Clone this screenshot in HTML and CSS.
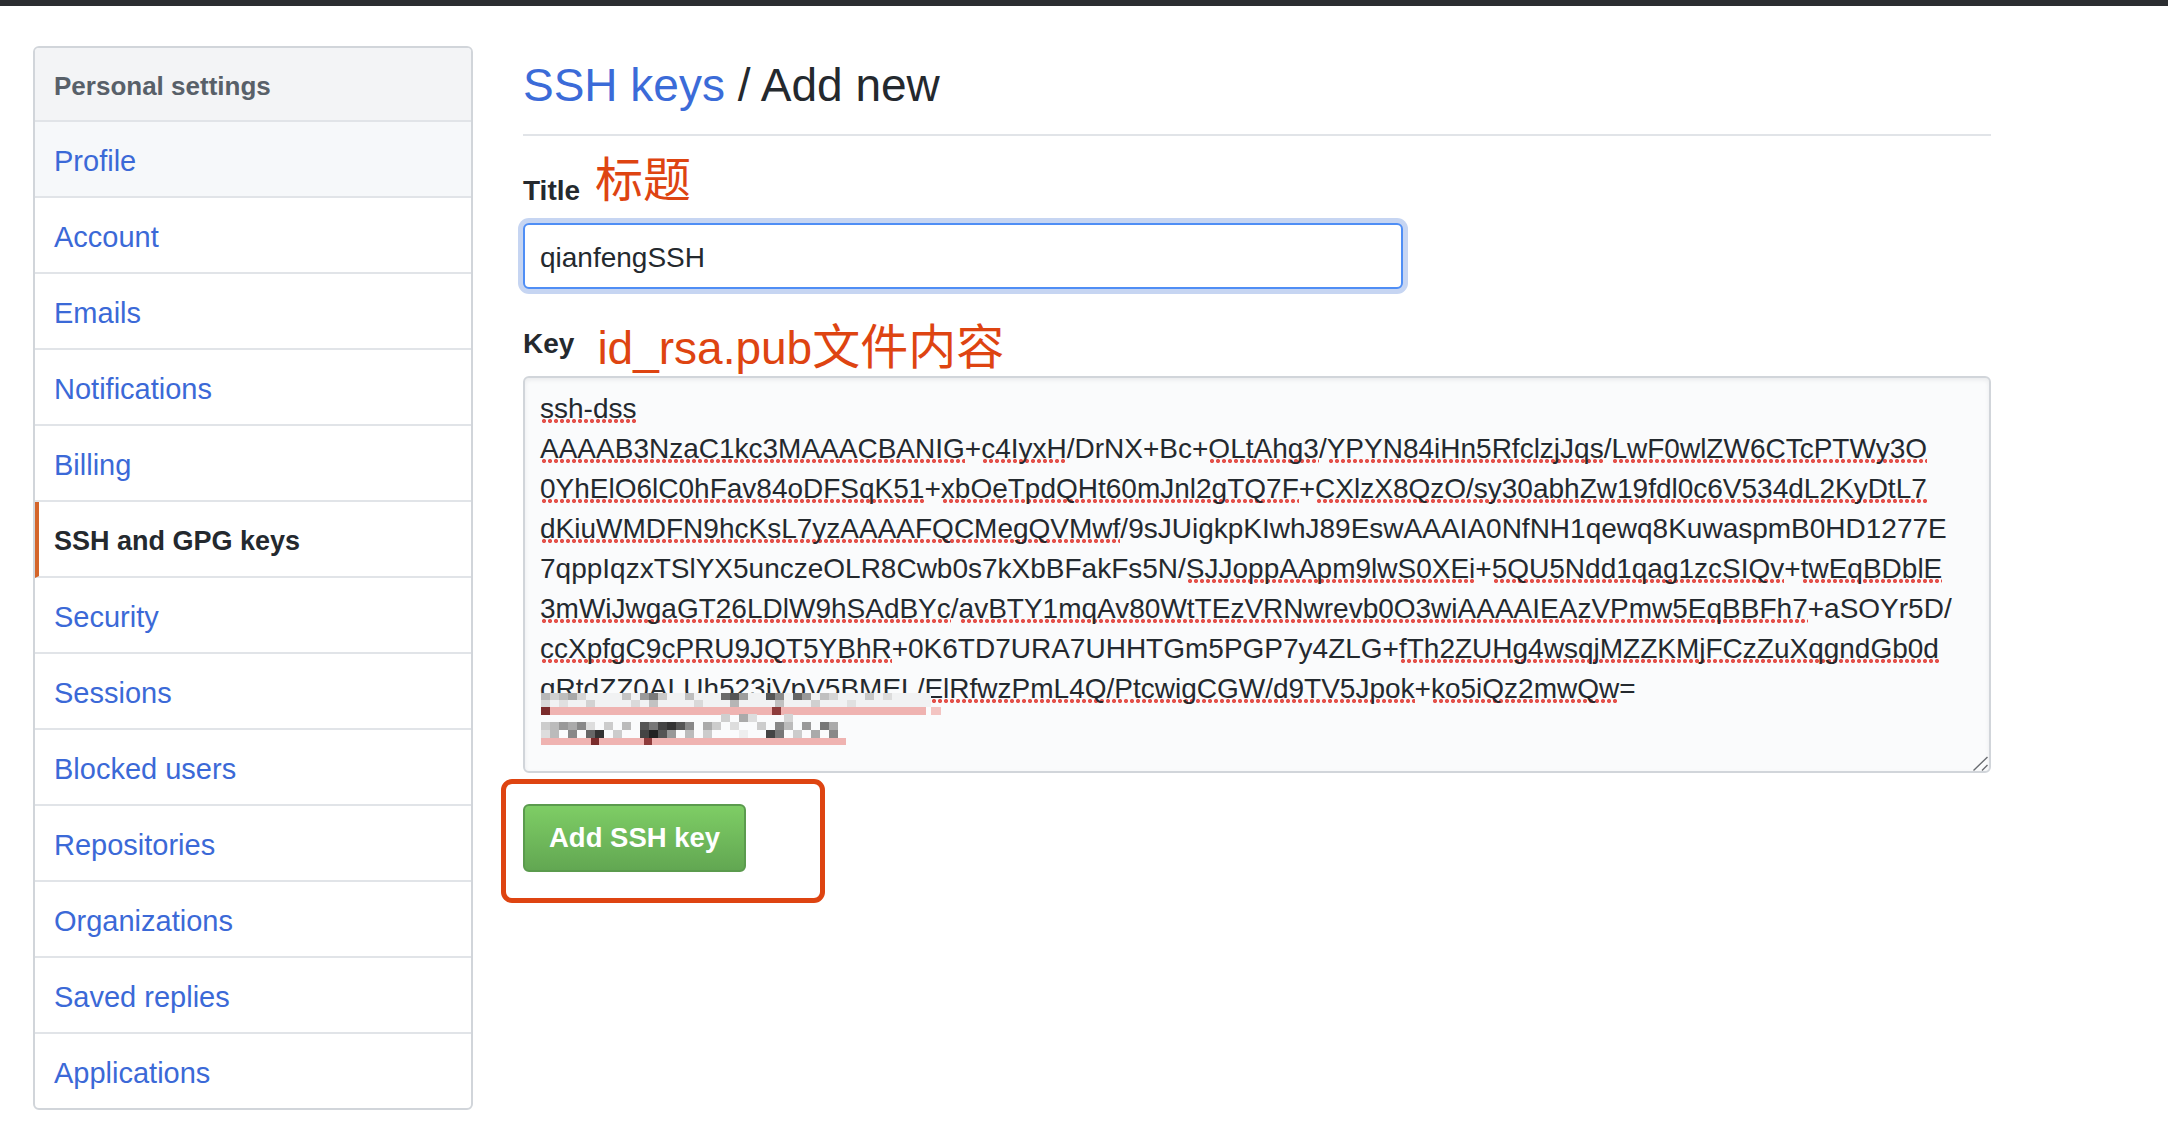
FILE: index.html
```html
<!DOCTYPE html>
<html lang="en">
<head>
<meta charset="utf-8">
<title>SSH keys / Add new</title>
<link rel="stylesheet" href="styles.css">
</head>
<body>
<div class="topbar"></div>
<div class="layout">
  <nav class="menu">
    <div class="menu-heading">Personal settings</div>
    <a class="menu-item is-hover" href="#">Profile</a>
    <a class="menu-item" href="#">Account</a>
    <a class="menu-item" href="#">Emails</a>
    <a class="menu-item" href="#">Notifications</a>
    <a class="menu-item" href="#">Billing</a>
    <a class="menu-item is-active" href="#">SSH and GPG keys</a>
    <a class="menu-item" href="#">Security</a>
    <a class="menu-item" href="#">Sessions</a>
    <a class="menu-item" href="#">Blocked users</a>
    <a class="menu-item" href="#">Repositories</a>
    <a class="menu-item" href="#">Organizations</a>
    <a class="menu-item" href="#">Saved replies</a>
    <a class="menu-item is-last" href="#">Applications</a>
  </nav>
  <main class="main">
    <div class="subhead">
      <h2 class="subhead-heading"><a class="crumb" href="#">SSH keys</a> / Add new</h2>
    </div>
    <form class="form">
      <div class="form-group">
        <div class="label-row"><label class="label">Title<span class="note note-title">标题</span></label></div>
        <input class="input" type="text" value="qianfengSSH">
      </div>
      <div class="form-group">
        <div class="label-row"><label class="label">Key<span class="note note-key"><span class="note-latin">id_rsa.pub</span>文件内容</span></label></div>
        <div class="keybox"><span class="sp">ssh-dss</span>
<span class="sp">AAAAB3NzaC1kc3MAAACBANIG</span>+<span class="sp">c4IyxH</span>/DrNX+Bc+<span class="sp">OLtAhg3</span>/<span class="sp">YPYN84iHn5RfclzjJqs</span>/<span class="sp">LwF0wlZW6CTcPTWy3O</span>
<span class="sp">0YhElO6lC0hFav84oDFSqK51</span>+<span class="sp">xbOeTpdQHt60mJnl2gTQ7F</span>+<span class="sp">CXlzX8QzO/sy30abhZw19fdl0c6V534dL2KyDtL7</span>
<span class="sp">dKiuWMDFN9hcKsL7yzAAAAFQCMegQVMwf</span>/9sJUigkpKIwhJ89EswAAAIA0NfNH1qewq8KuwaspmB0HD1277E
7qppIqzxTSlYX5unczeOLR8Cwb0s7kXbBFakFs5N/<span class="sp">SJJoppAApm9lwS0XEi</span>+<span class="sp">5QU5Ndd1qag1zcSIQv</span>+<span class="sp">twEqBDblE</span>
<span class="sp">3mWiJwgaGT26LDlW9hSAdBYc</span>/<span class="sp">avBTY1mqAv80WtTEzVRNwrevb0O3wiAAAAIEAzVPmw5EqBBFh7</span>+aSOYr5D/
<span class="sp">ccXpfgC9cPRU9JQT5YBhR</span>+0K6TD7URA7UHHTGm5PGP7y4ZLG+<span class="sp">fTh2ZUHg4wsqjMZZKMjFCzZuXqgndGb0d</span>
qRtdZZ0ALUh523jVpV5BMEL/<span class="sp">ElRfwzPmL4Q/PtcwigCGW/d9TV5Jpok</span>+<span class="sp">ko5iQz2mwQw</span>=
<svg class="mosaic" width="410" height="52" viewBox="0 0 410 52" aria-hidden="true">
  <rect x="0" y="0" width="390" height="14" fill="#f1f2f3"/>
  <rect x="0" y="0" width="9" height="7" fill="#b8b8b8"/><rect x="9" y="0" width="9" height="7" fill="#d0d0d0"/><rect x="18" y="0" width="9" height="7" fill="#bdbdbd"/><rect x="27" y="0" width="9" height="7" fill="#a8a8a8"/><rect x="36" y="0" width="9" height="7" fill="#d6d6d6"/><rect x="81" y="0" width="9" height="7" fill="#c4c4c4"/><rect x="99" y="0" width="9" height="7" fill="#9a9a9a"/><rect x="108" y="0" width="9" height="7" fill="#7a7a7a"/><rect x="117" y="0" width="9" height="7" fill="#c8c8c8"/><rect x="144" y="0" width="9" height="7" fill="#bebebe"/><rect x="180" y="0" width="9" height="7" fill="#6a6a6a"/><rect x="189" y="0" width="9" height="7" fill="#555"/><rect x="198" y="0" width="9" height="7" fill="#9d9d9d"/><rect x="225" y="0" width="9" height="7" fill="#555"/><rect x="234" y="0" width="9" height="7" fill="#8a8a8a"/><rect x="252" y="0" width="9" height="7" fill="#666"/><rect x="261" y="0" width="9" height="7" fill="#999"/><rect x="279" y="0" width="9" height="7" fill="#c0c0c0"/><rect x="288" y="0" width="9" height="7" fill="#d5d5d5"/><rect x="324" y="0" width="9" height="7" fill="#c8c8c8"/><rect x="342" y="0" width="9" height="7" fill="#dcdcdc"/>
  <rect x="0" y="7" width="9" height="7" fill="#d8d8d8"/><rect x="18" y="7" width="9" height="7" fill="#e0e0e0"/><rect x="45" y="7" width="9" height="7" fill="#d2d2d2"/><rect x="90" y="7" width="9" height="7" fill="#dadada"/><rect x="108" y="7" width="9" height="7" fill="#c2c2c2"/><rect x="153" y="7" width="9" height="7" fill="#d9d9d9"/><rect x="189" y="7" width="9" height="7" fill="#b5b5b5"/><rect x="234" y="7" width="9" height="7" fill="#c0c0c0"/><rect x="270" y="7" width="9" height="7" fill="#d0d0d0"/><rect x="306" y="7" width="9" height="7" fill="#e0e0e0"/>
  <rect x="0" y="14" width="385" height="8" fill="#efb3b1"/><rect x="0" y="14" width="9" height="8" fill="#7a2b2b"/><rect x="231" y="14" width="9" height="8" fill="#8e3b3b"/><rect x="390" y="14" width="10" height="8" fill="#f3c4c2"/>
  <rect x="180" y="21" width="9" height="8" fill="#cfcfcf"/><rect x="198" y="21" width="9" height="8" fill="#aaa"/><rect x="207" y="21" width="9" height="8" fill="#ddd"/><rect x="243" y="21" width="9" height="8" fill="#d4d4d4"/>
  <rect x="0" y="29" width="9" height="8" fill="#ccc"/><rect x="9" y="29" width="9" height="8" fill="#bbb"/><rect x="18" y="29" width="9" height="8" fill="#999"/><rect x="27" y="29" width="9" height="8" fill="#aaa"/><rect x="36" y="29" width="9" height="8" fill="#888"/><rect x="45" y="29" width="9" height="8" fill="#ddd"/><rect x="63" y="29" width="9" height="8" fill="#ccc"/><rect x="81" y="29" width="9" height="8" fill="#bbb"/><rect x="99" y="29" width="9" height="8" fill="#555"/><rect x="108" y="29" width="9" height="8" fill="#777"/><rect x="117" y="29" width="9" height="8" fill="#444"/><rect x="126" y="29" width="9" height="8" fill="#333"/><rect x="135" y="29" width="9" height="8" fill="#555"/><rect x="144" y="29" width="9" height="8" fill="#888"/><rect x="162" y="29" width="9" height="8" fill="#aaa"/><rect x="171" y="29" width="9" height="8" fill="#ccc"/><rect x="189" y="29" width="9" height="8" fill="#ddd"/><rect x="216" y="29" width="9" height="8" fill="#ccc"/><rect x="234" y="29" width="9" height="8" fill="#888"/><rect x="243" y="29" width="9" height="8" fill="#bbb"/><rect x="261" y="29" width="9" height="8" fill="#999"/><rect x="279" y="29" width="9" height="8" fill="#777"/><rect x="288" y="29" width="9" height="8" fill="#aaa"/>
  <rect x="0" y="37" width="9" height="8" fill="#ddd"/><rect x="9" y="37" width="9" height="8" fill="#bbb"/><rect x="27" y="37" width="9" height="8" fill="#888"/><rect x="45" y="37" width="9" height="8" fill="#666"/><rect x="54" y="37" width="9" height="8" fill="#333"/><rect x="72" y="37" width="9" height="8" fill="#ccc"/><rect x="99" y="37" width="9" height="8" fill="#444"/><rect x="108" y="37" width="9" height="8" fill="#222"/><rect x="117" y="37" width="9" height="8" fill="#555"/><rect x="126" y="37" width="9" height="8" fill="#999"/><rect x="144" y="37" width="9" height="8" fill="#bbb"/><rect x="162" y="37" width="9" height="8" fill="#ccc"/><rect x="198" y="37" width="9" height="8" fill="#eee"/><rect x="225" y="37" width="9" height="8" fill="#444"/><rect x="234" y="37" width="9" height="8" fill="#777"/><rect x="252" y="37" width="9" height="8" fill="#ccc"/><rect x="270" y="37" width="9" height="8" fill="#aaa"/><rect x="288" y="37" width="9" height="8" fill="#888"/>
  <rect x="0" y="45" width="305" height="7" fill="#efb3b1"/><rect x="50" y="45" width="8" height="7" fill="#7a2b2b"/><rect x="103" y="45" width="8" height="7" fill="#8e3b3b"/>
</svg><svg class="grip" width="16" height="16" viewBox="0 0 16 16" aria-hidden="true"><path d="M0.5 15.5 L14.5 2 M9 15.5 L14.5 10" stroke="#6a6d72" stroke-width="1.4" fill="none"/></svg></div>
      </div>
      <div class="actions">
        <button class="btn" type="button">Add SSH key</button>
        <span class="mark" aria-hidden="true"></span>
      </div>
    </form>
  </main>
</div>
</body>
</html>
```

FILE: styles.css
```css
* { box-sizing: border-box; }

html, body {
  margin: 0;
  padding: 0;
  background: #ffffff;
}

body {
  font-family: "Liberation Sans", Arial, sans-serif;
  color: #24292e;
}

.topbar {
  height: 6px;
  background: #2b2d31;
}

.layout {
  display: flex;
  align-items: flex-start;
  gap: 50px;
  padding: 40px 0 0 33px;
}

/* sidebar */
.menu {
  flex: 0 0 440px;
  display: flex;
  flex-direction: column;
  border: 2px solid #d1d5da;
  border-radius: 6px;
  overflow: hidden;
  background: #fff;
}

.menu-heading {
  padding: 18px 19px 14px;
  line-height: 40px;
  font-size: 26px;
  font-weight: 700;
  color: #586069;
  background: #f3f4f6;
  border-bottom: 2px solid #e1e4e8;
}

.menu-item {
  display: block;
  padding: 19px 19px 15px;
  line-height: 40px;
  font-size: 29px;
  color: #3b69d7;
  text-decoration: none;
  border-bottom: 2px solid #e1e4e8;
}

.menu-item.is-hover { background: #f6f8fa; }

.menu-item.is-active {
  border-left: 4px solid #d4652a;
  padding-left: 15px;
  font-size: 27px;
  font-weight: 700;
  color: #24292e;
}

.menu-item.is-last { border-bottom: 0; }

/* main */
.main {
  flex: 0 0 1468px;
  padding-top: 10px;
}

.subhead {
  padding-bottom: 20px;
  border-bottom: 2px solid #e1e4e8;
}

.subhead-heading {
  margin: 0;
  font-size: 46px;
  line-height: 58px;
  font-weight: 400;
  color: #24292e;
}

.crumb {
  color: #3b6bd8;
  text-decoration: none;
}

.form { margin: 0; }

.form-group { margin-top: 35px; }

.label-row {
  display: flex;
  height: 40px;
  font-size: 28px;
  line-height: 40px;
}

.label {
  position: relative;
  display: block;
  font-size: 28px;
  line-height: 40px;
  font-weight: 700;
  color: #24292e;
}

.note {
  position: absolute;
  white-space: nowrap;
  font-family: "Liberation Sans", "Noto Sans CJK SC", sans-serif;
  font-weight: 400;
  font-size: 48px;
  line-height: 48px;
  color: #de4411;
}

.note-title { left: calc(100% + 15px); top: -14px; }
.note-key { left: calc(100% + 23px); top: 0; }
.note-latin { font-size: 46px; }

.input {
  display: block;
  margin-top: 12px;
  width: 880px;
  height: 66px;
  padding: 3px 15px 0;
  font-family: "Liberation Sans", Arial, sans-serif;
  font-size: 28px;
  color: #24292e;
  background: #fff;
  border: 2px solid #4f8ef5;
  border-radius: 6px;
  box-shadow: 0 0 0 5px #c6d5f2;
  outline: none;
}

.keybox {
  position: relative;
  margin-top: 12px;
  width: 100%;
  height: 397px;
  padding: 11px 15px;
  font-size: 28px;
  line-height: 40px;
  color: #24292e;
  white-space: pre;
  overflow: hidden;
  background: #fafbfc;
  border: 2px solid #d1d5da;
  border-radius: 6px;
  box-shadow: inset 0 2px 4px rgba(27, 31, 35, 0.075);
}

.sp {
  background-image: radial-gradient(circle at 3px 3px, #e4524b 0, #e4524b 1.7px, rgba(228, 82, 75, 0) 2.4px);
  background-size: 6px 6px;
  background-repeat: repeat-x;
  background-position: 1px 100%;
}

.mosaic {
  position: absolute;
  left: 16px;
  top: 315px;
}

.grip {
  position: absolute;
  right: 0;
  bottom: 0;
}

.actions {
  position: relative;
  margin-top: 31px;
}

.btn {
  display: inline-block;
  vertical-align: top;
  height: 68px;
  padding: 0 24px;
  font-family: "Liberation Sans", Arial, sans-serif;
  font-size: 27.5px;
  font-weight: 700;
  color: #fff;
  background: linear-gradient(180deg, #7ecd65 0%, #62a752 100%);
  border: 2px solid #5b9b4e;
  border-radius: 6px;
  cursor: pointer;
}

.mark {
  position: absolute;
  left: -22px;
  top: -25px;
  width: 324px;
  height: 124px;
  border: 5px solid #de4411;
  border-radius: 11px;
  pointer-events: none;
}
```
